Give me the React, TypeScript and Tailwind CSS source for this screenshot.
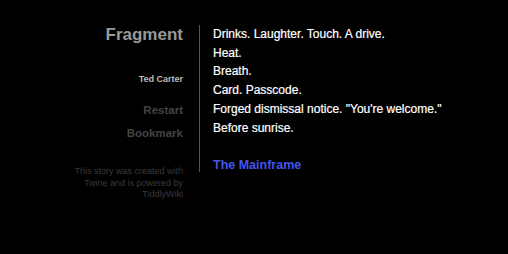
export default function App() {
  return (
    <div className="w-[508px] h-[254px] bg-black overflow-hidden font-['Liberation_Sans',Arial,sans-serif]">
      <div className="flex items-start pt-[25px]">
        {/* Sidebar */}
        <div className="w-[184px] shrink-0 text-right pr-px">
          <h1 className="text-[17px] leading-[20px] font-bold text-[#999999]">Fragment</h1>
          <p className="mt-[28px] text-[9px] leading-[12px] font-bold text-[#bbbbbb]">Ted Carter</p>
          <ul className="mt-[18px] flex flex-col gap-[8px] text-[11.5px] leading-[15px] font-bold text-[#444444]">
            <li>Restart</li>
            <li>Bookmark</li>
          </ul>
          <p className="mt-[25px] text-[9px] leading-[11.5px] text-[#3a3a3a] pl-[60px]">
            This story was created with Twine and is powered by TiddlyWiki
          </p>
        </div>

        {/* Passage */}
        <div className="ml-[15px] border-l border-[#555555] pl-[13px] h-[147px] text-[12px] leading-[18.7px] text-white [-webkit-text-stroke:0.2px_white]">
          <p>
            Drinks. Laughter. Touch. A drive.
            <br />
            Heat.
            <br />
            Breath.
            <br />
            Card. Passcode.
            <br />
            Forged dismissal notice. "You're welcome."
            <br />
            Before sunrise.
            <br />
            <br />
            <span className="font-bold text-[12.5px] text-[#4455ee] [-webkit-text-stroke:0px]">The Mainframe</span>
          </p>
        </div>
      </div>
    </div>
  );
}
